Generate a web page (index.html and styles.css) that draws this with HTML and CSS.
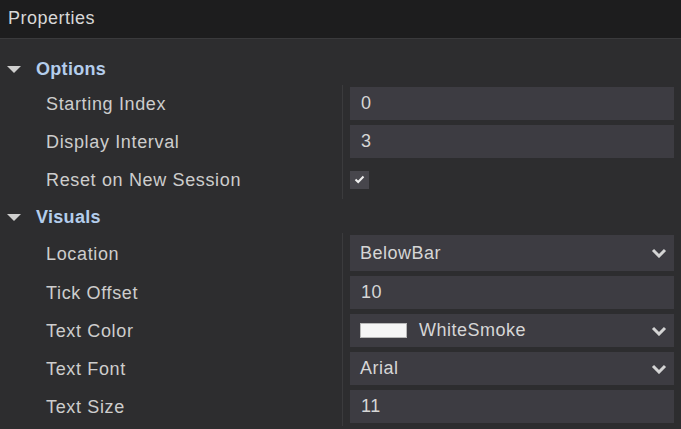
FILE: index.html
```html
<!DOCTYPE html>
<html lang="en">
<head>
    <meta charset="UTF-8">
    <title>Properties</title>
    <link rel="stylesheet" href="styles.css">
</head>
<body>
    <div class="panel">
        <div class="panel-title">Properties</div>
        <div class="grid">
            <!-- Options -->
            <div class="category"><span class="caret"></span>Options</div>
            <div class="row">
                <div class="label">Starting Index</div>
                <div class="value"><div class="field">0</div></div>
            </div>
            <div class="row">
                <div class="label">Display Interval</div>
                <div class="value"><div class="field">3</div></div>
            </div>
            <div class="row">
                <div class="label">Reset on New Session</div>
                <div class="value">
                    <div class="checkbox">
                        <svg width="11" height="9" viewBox="0 0 11 9"><path d="M1.5 4.5 L4.2 7 L9.5 1.5" fill="none" stroke="#f0f0f0" stroke-width="2"/></svg>
                    </div>
                </div>
            </div>

            <!-- Visuals -->
            <div class="category"><span class="caret"></span>Visuals</div>
            <div class="row row-tall">
                <div class="label">Location</div>
                <div class="value">
                    <div class="field select tall">BelowBar
                        <svg class="chevron" width="16" height="10" viewBox="0 0 16 10"><path d="M2 2 L8 8 L14 2" fill="none" stroke="#d4d4d4" stroke-width="3"/></svg>
                    </div>
                </div>
            </div>
            <div class="row">
                <div class="label">Tick Offset</div>
                <div class="value"><div class="field">10</div></div>
            </div>
            <div class="row">
                <div class="label">Text Color</div>
                <div class="value">
                    <div class="field select"><span class="swatch"></span>WhiteSmoke
                        <svg class="chevron" width="16" height="10" viewBox="0 0 16 10"><path d="M2 2 L8 8 L14 2" fill="none" stroke="#d4d4d4" stroke-width="3"/></svg>
                    </div>
                </div>
            </div>
            <div class="row">
                <div class="label">Text Font</div>
                <div class="value">
                    <div class="field select">Arial
                        <svg class="chevron" width="16" height="10" viewBox="0 0 16 10"><path d="M2 2 L8 8 L14 2" fill="none" stroke="#d4d4d4" stroke-width="3"/></svg>
                    </div>
                </div>
            </div>
            <div class="row">
                <div class="label">Text Size</div>
                <div class="value"><div class="field">11</div></div>
            </div>
        </div>
    </div>
</body>
</html>
```

FILE: styles.css
```css
/* Reset */
* {
    margin: 0;
    padding: 0;
    box-sizing: border-box;
}

body {
    font-family: 'Liberation Sans', Arial, sans-serif;
    background: #2d2d2f;
    width: 681px;
    height: 429px;
    overflow: hidden;
}

/* Title bar */
.panel-title {
    height: 39px;
    background: #1d1d1e;
    border-bottom: 1px solid #3a3a3c;
    color: #d8d8d8;
    font-size: 18px;
    letter-spacing: 0.5px;
    padding-left: 8px;
    line-height: 37px;
}

.grid {
    padding-top: 12px;
    padding-right: 7px;
}

/* Category headers */
.category {
    height: 34px;
    display: flex;
    align-items: center;
    padding-left: 7px;
    padding-top: 2px;
    color: #b4cdec;
    font-size: 18px;
    font-weight: bold;
    letter-spacing: 0.3px;
}

.caret {
    width: 0;
    height: 0;
    border-left: 7px solid transparent;
    border-right: 7px solid transparent;
    border-top: 7px solid #cfcfcf;
    margin-right: 15px;
}

/* Property rows */
.row {
    display: flex;
    height: 38px;
}

.row-tall {
    height: 41px;
}

.label {
    width: 343px;
    padding-left: 46px;
    padding-top: 1px;
    border-right: 1px solid #3b3b3d;
    color: #cdcdcd;
    font-size: 18px;
    letter-spacing: 0.65px;
    display: flex;
    align-items: center;
}

.value {
    flex: 1;
    padding: 2px 0 3px 7px;
    display: flex;
    align-items: center;
}

.field {
    width: 100%;
    height: 33px;
    background: #3d3c42;
    color: #d6d6d6;
    font-size: 18px;
    letter-spacing: 0.5px;
    padding-left: 11px;
    display: flex;
    align-items: center;
}

.field.tall {
    height: 36px;
}

.select {
    position: relative;
    padding-left: 10px;
}

.chevron {
    position: absolute;
    right: 7px;
    top: 50%;
    margin-top: -5px;
}

.swatch {
    width: 47px;
    height: 15px;
    background: #f5f5f5;
    border: 1px solid #b8b8b8;
    margin-right: 12px;
}

.checkbox {
    width: 19px;
    height: 18px;
    background: #47464c;
    display: flex;
    align-items: center;
    justify-content: center;
}
```
